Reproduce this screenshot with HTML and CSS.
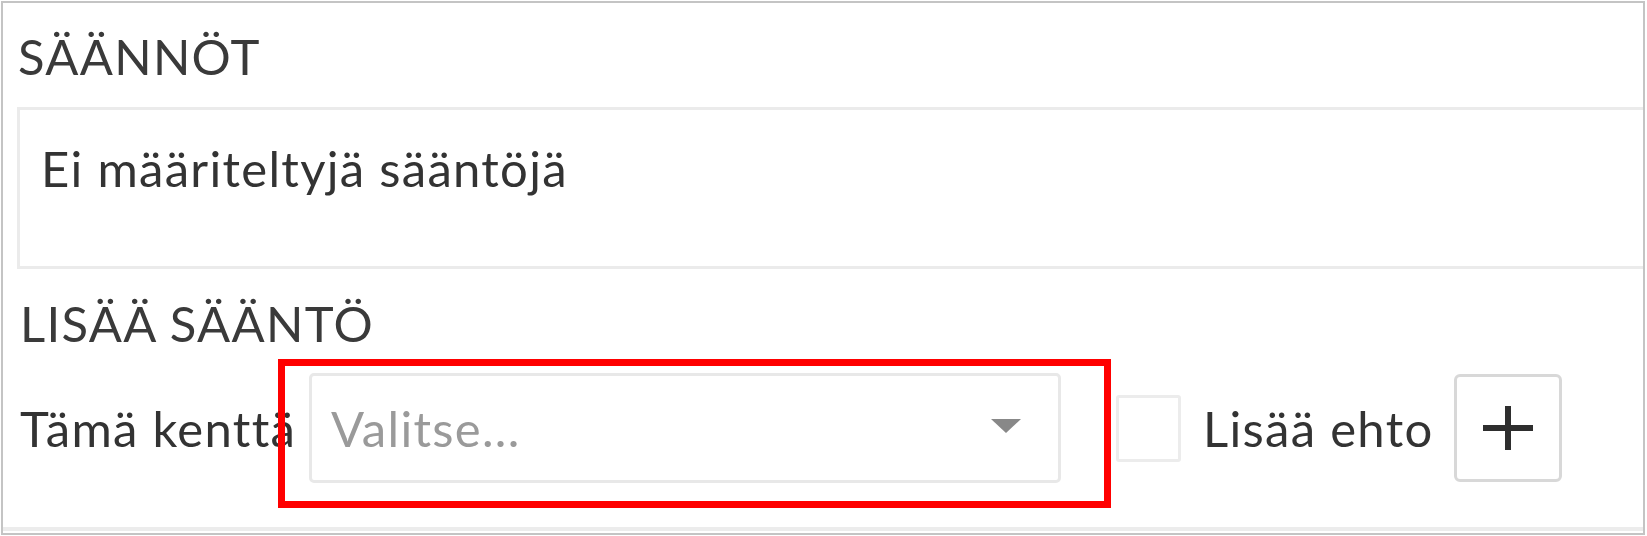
FILE: index.html
```html
<!DOCTYPE html>
<html lang="fi">
<head>
<meta charset="utf-8">
<title>Säännöt</title>
<link rel="stylesheet" href="styles.css">
</head>
<body>
<div class="frame">
  <div class="panel">
    <div class="title title-first">SÄÄNNÖT</div>
    <div class="rules-box">Ei määriteltyjä sääntöjä</div>
    <div class="title title-second">LISÄÄ SÄÄNTÖ</div>
    <div class="rule-row">
      <span class="field-label">Tämä kenttä</span>
      <div class="select">
        <span class="placeholder">Valitse...</span>
        <svg class="caret" width="30" height="14" viewBox="0 0 30 14"><polygon points="0,0 30,0 15,14" fill="#888"/></svg>
      </div>
      <span class="checkbox"></span>
      <span class="add-label">Lisää ehto</span>
      <button class="add-btn" type="button" aria-label="Lisää ehto">
        <svg width="50" height="48" viewBox="0 0 50 48"><path d="M0 24H50M25 2V46" stroke="#2e2e2e" stroke-width="6" fill="none"/></svg>
      </button>
    </div>
  </div>
  <div class="highlight"></div>
</div>
</body>
</html>
```

FILE: styles.css
```css
html, body {
  margin: 0;
  padding: 0;
  background: #ffffff;
}

.frame {
  position: relative;
  margin: 1px;
  width: 1640px;
  height: 530px;
  border: 2px solid #c4c4c4;
  overflow: hidden;
  font-family: "Lato", "Liberation Sans", sans-serif;
  font-size: 49px;
  line-height: 58px;
  letter-spacing: 1.3px;
  color: #333333;
}

.panel {
  box-sizing: border-box;
  width: 1660px;
  height: 528px;
  padding: 24px 0 0 14px;
  border-bottom: 4px solid #ececec;
}

.title {
  color: #3a3a3a;
  padding-left: 1px;
}

.title-second {
  margin-top: 25px;
  padding-left: 3px;
}

.rules-box {
  margin-top: 22px;
  border: 3px solid #ebebeb;
  padding: 29px 0 0 21px;
  height: 127px;
}

.rule-row {
  margin-top: 21px;
  display: flex;
  align-items: center;
  height: 110px;
}

.field-label {
  flex: 0 0 292px;
  padding-left: 3px;
  box-sizing: border-box;
  white-space: nowrap;
}

.select {
  box-sizing: border-box;
  flex: 0 0 752px;
  height: 110px;
  border: 3px solid #e8e8e8;
  border-radius: 5px;
  display: flex;
  align-items: center;
  justify-content: space-between;
  padding: 0 37px 0 19px;
}

.placeholder {
  color: #9a9a9a;
}

.caret {
  display: block;
  margin-bottom: 4px;
}

.checkbox {
  box-sizing: border-box;
  flex: 0 0 65px;
  height: 67px;
  margin-left: 55px;
  border: 3px solid #ececec;
  border-radius: 3px;
}

.add-label {
  margin-left: 22px;
  white-space: nowrap;
}

.add-btn {
  box-sizing: border-box;
  flex: 0 0 108px;
  height: 108px;
  margin-left: 20px;
  padding: 0;
  background: #ffffff;
  border: 3px solid #d8d8d8;
  border-radius: 6px;
  display: flex;
  align-items: center;
  justify-content: center;
}

.add-btn svg {
  display: block;
}

.highlight {
  position: absolute;
  left: 275px;
  top: 356px;
  width: 819px;
  height: 135px;
  border: 7px solid #ff0000;
}
```
